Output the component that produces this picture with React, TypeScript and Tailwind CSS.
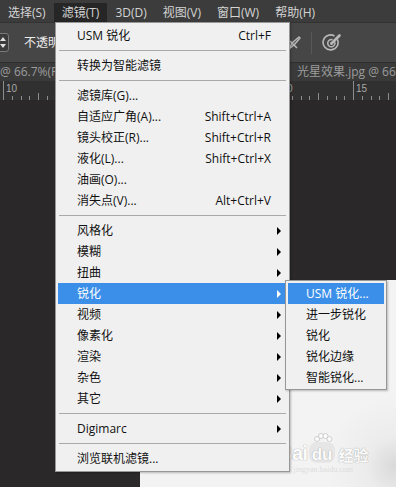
import React from "react";

const FONT = "font-['Open_Sans','Noto_Sans_CJK_SC',sans-serif]";

type Row =
  | { kind: "item"; label: string; shortcut?: string; sub?: boolean; active?: boolean }
  | { kind: "sep" };

const rows: Row[] = [
  { kind: "item", label: "USM 锐化", shortcut: "Ctrl+F" },
  { kind: "sep" },
  { kind: "item", label: "转换为智能滤镜" },
  { kind: "sep" },
  { kind: "item", label: "滤镜库(G)..." },
  { kind: "item", label: "自适应广角(A)...", shortcut: "Shift+Ctrl+A" },
  { kind: "item", label: "镜头校正(R)...", shortcut: "Shift+Ctrl+R" },
  { kind: "item", label: "液化(L)...", shortcut: "Shift+Ctrl+X" },
  { kind: "item", label: "油画(O)..." },
  { kind: "item", label: "消失点(V)...", shortcut: "Alt+Ctrl+V" },
  { kind: "sep" },
  { kind: "item", label: "风格化", sub: true },
  { kind: "item", label: "模糊", sub: true },
  { kind: "item", label: "扭曲", sub: true },
  { kind: "item", label: "锐化", sub: true, active: true },
  { kind: "item", label: "视频", sub: true },
  { kind: "item", label: "像素化", sub: true },
  { kind: "item", label: "渲染", sub: true },
  { kind: "item", label: "杂色", sub: true },
  { kind: "item", label: "其它", sub: true },
  { kind: "sep" },
  { kind: "item", label: "Digimarc", sub: true },
  { kind: "sep" },
  { kind: "item", label: "浏览联机滤镜..." },
];

const subRows = [
  { label: "USM 锐化...", active: true },
  { label: "进一步锐化" },
  { label: "锐化" },
  { label: "锐化边缘" },
  { label: "智能锐化..." },
];

function Arrow({ white }: { white?: boolean }) {
  return (
    <svg width="4" height="8" viewBox="0 0 4 8" className="shrink-0">
      <path d="M0 0 L4 4 L0 8 Z" fill={white ? "#ffffff" : "#000000"} />
    </svg>
  );
}

function Ruler() {
  const majors = [3, 73, 143, 213, 283, 353];
  const labels = ["10", "5", "0", "5", "10", "15"];
  const ticks: React.ReactNode[] = [];
  majors.forEach((m, k) => {
    ticks.push(<line key={"M" + k} x1={m + 0.5} y1={0} x2={m + 0.5} y2={19} stroke="#8c8c8c" strokeWidth={1} />);
    for (let i = 1; i < 8; i++) {
      const x = Math.round(m + i * 8.75) + 0.5;
      ticks.push(
        <line key={"m" + k + "-" + i} x1={x} y1={i === 4 ? 12 : 15} x2={x} y2={19} stroke="#8c8c8c" strokeWidth={1} />
      );
    }
    if (k === 0 || k === 5) {
      ticks.push(
        <text key={"t" + k} x={m + 3} y={11} fontSize="10" fill="#a8a8a8" fontFamily="Liberation Sans, sans-serif">
          {labels[k]}
        </text>
      );
    }
  });
  return (
    <div className="h-[19px] bg-[#303030] shrink-0">
      <svg width="396" height="19" viewBox="0 0 396 19" className="block">
        {ticks}
        <text x={287} y={11} fontSize="10" fill="#a8a8a8" fontFamily="Liberation Sans, sans-serif">0</text>
      </svg>
    </div>
  );
}

export default function App() {
  const menuBar = ["选择(S)", "滤镜(T)", "3D(D)", "视图(V)", "窗口(W)", "帮助(H)"];
  return (
    <div className={`relative w-[396px] h-[487px] overflow-hidden bg-[#2a2829] ${FONT} text-[12px] flex flex-col`}>
      {/* menu bar */}
      <div className="h-[22px] shrink-0 bg-[#3c3c3c] flex items-end text-[#d4d4d4]">
        {menuBar.map((m, i) => (
          <div
            key={m}
            className={`h-[19px] px-2 flex items-center whitespace-nowrap ${i === 1 ? "bg-[#262626]" : ""}`}
          >
            {m}
          </div>
        ))}
      </div>

      {/* options toolbar */}
      <div className="h-[40px] shrink-0 bg-[#464646] border-t border-[#333333] flex items-center">
        <div className="ml-[-6px] w-[15px] h-[19px] rounded-[3px] border border-[#7a7a7a] bg-[#3b3b3b] flex items-center justify-end pr-[2px]">
          <svg width="6" height="11" viewBox="0 0 6 11">
            <path d="M3 0 L6 4 L0 4 Z M3 11 L6 7 L0 7 Z" fill="#e0e0e0" />
          </svg>
        </div>
        <div className="ml-[15px] w-[31px] overflow-hidden text-[#ececec] whitespace-nowrap">不透明</div>
        <div className="ml-auto mr-[54px] flex items-center">
          <svg width="16" height="16" viewBox="0 0 16 16" className="mr-[9px]">
            <path d="M3 14 L6 8 L13 2 L14 3 L8 10 Z" fill="none" stroke="#b8b8b8" strokeWidth="1.5" strokeLinejoin="round" />
            <path d="M4 6 L11 13" stroke="#b8b8b8" strokeWidth="1.5" />
          </svg>
          <div className="w-px h-[22px] bg-[#2c2c2c] border-r border-[#585858] mr-[10px]" />
          <svg width="20" height="20" viewBox="0 0 20 20">
            <path d="M15.5 6.5 A7.5 7.5 0 1 1 12.5 3" fill="none" stroke="#b8b8b8" strokeWidth="1.6" />
            <path d="M12.5 8.5 A3.6 3.6 0 1 1 10.5 6.8" fill="none" stroke="#b8b8b8" strokeWidth="1.5" />
            <circle cx="9.5" cy="10.5" r="1.3" fill="#b8b8b8" />
            <path d="M9.5 10.5 L17.5 2.5" stroke="#b8b8b8" strokeWidth="2.6" strokeLinecap="round" />
          </svg>
        </div>
      </div>

      {/* document tabs */}
      <div className="h-[19px] shrink-0 bg-[#3a3a3a] border-t border-[#2e2e2e] flex items-center text-[#9c9c9c] whitespace-nowrap overflow-hidden">
        <div className="w-[55px] shrink-0 overflow-hidden">@ 66.7%(R</div>
        <div className="w-[242px] shrink-0" />
        <div className="shrink-0">光星效果.jpg @ 66</div>
      </div>

      <Ruler />

      {/* canvas */}
      <div className="flex-1 pl-[140px] pt-[180px] flex flex-col">
        <div className="flex-1 bg-[#f2f2f2] bg-[radial-gradient(circle_at_100%_90%,#d9d9d9_0px,#ececec_30px,#f3f3f3_70px)]" />
      </div>

      {/* baidu watermark */}
      <div className="absolute left-[278px] top-[442px] flex flex-col items-center opacity-75">
        <div className="flex items-end leading-none text-white font-bold [text-shadow:0_0_1px_#9a9a9a,0_0_1px_#9a9a9a] font-['Liberation_Sans','Noto_Sans_CJK_SC',sans-serif]">
          <span className="text-[20px] tracking-[-0.5px]">Bai</span>
          <span className="relative mx-[1px] px-[3px] pt-[4px] rounded-[8px] bg-[#e2e2e2] text-[17px]">
            du
            <svg width="20" height="12" viewBox="0 0 20 12" className="absolute left-[4px] top-[-9px]">
              <circle cx="4" cy="6" r="2.5" fill="#ffffff" stroke="#b5b5b5" strokeWidth="0.8" />
              <circle cx="8" cy="3" r="2.5" fill="#ffffff" stroke="#b5b5b5" strokeWidth="0.8" />
              <circle cx="12.5" cy="3" r="2.5" fill="#ffffff" stroke="#b5b5b5" strokeWidth="0.8" />
              <circle cx="16.5" cy="6" r="2.5" fill="#ffffff" stroke="#b5b5b5" strokeWidth="0.8" />
            </svg>
          </span>
          <span className="text-[15px] ml-[2px]">经验</span>
        </div>
        <div className="mt-[3px] text-[8px] leading-none text-[#d6d6d6] font-['Liberation_Serif',serif]">jingyan.baidu.com</div>
      </div>

      {/* filter menu */}
      <div className="absolute left-[55px] top-[22px] w-[235px] bg-[#f0f0f0] border border-[#979797] px-[2px] py-[2px] text-[#111111] shadow-[1px_1px_2px_rgba(0,0,0,0.25)]">
        {rows.map((r, i) =>
          r.kind === "sep" ? (
            <div key={i} className="h-[9px] flex items-center px-[1px]">
              <div className="h-px w-full bg-[#a9a9a9]" />
            </div>
          ) : (
            <div
              key={i}
              className={`h-[21px] flex items-center pl-[19px] pr-[6px] whitespace-nowrap ${
                r.active ? "bg-[#3c8fe8] text-white" : ""
              }`}
            >
              <span>{r.label}</span>
              <span className="ml-auto flex items-center">
                {r.shortcut ? <span className="mr-[10px]">{r.shortcut}</span> : null}
                {r.sub ? <Arrow white={r.active} /> : null}
              </span>
            </div>
          )
        )}
      </div>

      {/* sharpen submenu */}
      <div className="absolute left-[285px] top-[280px] w-[102px] bg-[#f0f0f0] border border-[#979797] px-[2px] pt-[2px] pb-[1px] text-[#111111] shadow-[1px_1px_2px_rgba(0,0,0,0.25)]">
        {subRows.map((r) => (
          <div
            key={r.label}
            className={`h-[21px] flex items-center pl-[18px] whitespace-nowrap ${
              r.active ? "bg-[#3c8fe8] text-white" : ""
            }`}
          >
            {r.label}
          </div>
        ))}
      </div>
    </div>
  );
}
